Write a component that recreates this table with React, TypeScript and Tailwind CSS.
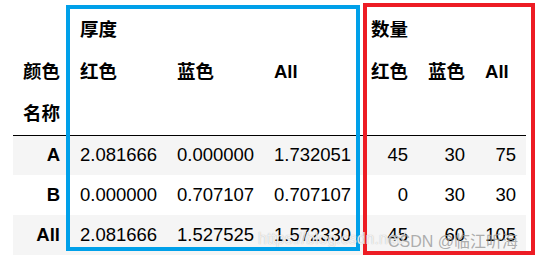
import React from "react";

const font = { fontFamily: '"Liberation Sans", Arial, "Noto Sans CJK SC", sans-serif' };

const rows = [
  { idx: "A", t: ["2.081666", "0.000000", "1.732051"], q: ["45", "30", "75"], bg: "bg-[#f5f5f5]" },
  { idx: "B", t: ["0.000000", "0.707107", "0.707107"], q: ["0", "30", "30"], bg: "bg-white" },
  { idx: "All", t: ["2.081666", "1.527525", "1.572330"], q: ["45", "60", "105"], bg: "bg-[#f5f5f5]" },
];

export default function App() {
  return (
    <div className="relative w-[539px] h-[259px] bg-white overflow-hidden text-black text-[18.5px] leading-none" style={font}>
      <div className="pl-[13px] pt-[9px]">
        <table className="border-collapse table-fixed w-[513px]">
          <colgroup>
            <col className="w-[57px]" />
            <col className="w-[97px]" />
            <col className="w-[97px]" />
            <col className="w-[97px]" />
            <col className="w-[57px]" />
            <col className="w-[57px]" />
            <col className="w-[51px]" />
          </colgroup>
          <thead className="font-bold">
            <tr className="h-[42px]">
              <th className="px-[10px]"></th>
              <th colSpan={3} className="px-[10px] text-left">厚度</th>
              <th colSpan={3} className="px-[10px] text-left">数量</th>
            </tr>
            <tr className="h-[42px]">
              <th className="pr-[10px] text-right whitespace-nowrap">颜色</th>
              <th className="px-[10px] text-left">红色</th>
              <th className="px-[10px] text-left">蓝色</th>
              <th className="px-[10px] text-left">All</th>
              <th className="px-[10px] text-left whitespace-nowrap">红色</th>
              <th className="px-[10px] text-left whitespace-nowrap">蓝色</th>
              <th className="px-[10px] text-left">All</th>
            </tr>
            <tr className="h-[42px] border-b border-black">
              <th className="pr-[10px] text-right whitespace-nowrap">名称</th>
              <th></th>
              <th></th>
              <th></th>
              <th></th>
              <th></th>
              <th></th>
            </tr>
          </thead>
          <tbody>
            {rows.map((r) => (
              <tr key={r.idx} className={`h-[40px] ${r.bg}`}>
                <th className="pr-[10px] text-right font-bold">{r.idx}</th>
                {r.t.map((v, i) => (
                  <td key={"t" + i} className="px-[10px] text-right">{v}</td>
                ))}
                {r.q.map((v, i) => (
                  <td key={"q" + i} className="px-[10px] text-right">{v}</td>
                ))}
              </tr>
            ))}
          </tbody>
        </table>
      </div>

      {/* annotation boxes */}
      <div className="absolute left-[66px] top-[5px] w-[294px] h-[246px] border-[4px] border-[#00a0e9]" />
      <div className="absolute left-[363px] top-[3px] w-[172px] h-[252px] border-[4px] border-[#ed1c24]" />

      {/* watermark */}
      <div
        className="absolute left-[258px] top-[231px] text-[16px] text-white/80 whitespace-nowrap"
        style={{ textShadow: "0 0 1px rgba(120,120,120,0.6)" }}
      >
        https://blog.csdn.net/
      </div>
      <div className="absolute left-[388px] top-[234px] text-[16px] text-[#9a9a9a]/80 whitespace-nowrap">
        CSDN @临江听海
      </div>
    </div>
  );
}
